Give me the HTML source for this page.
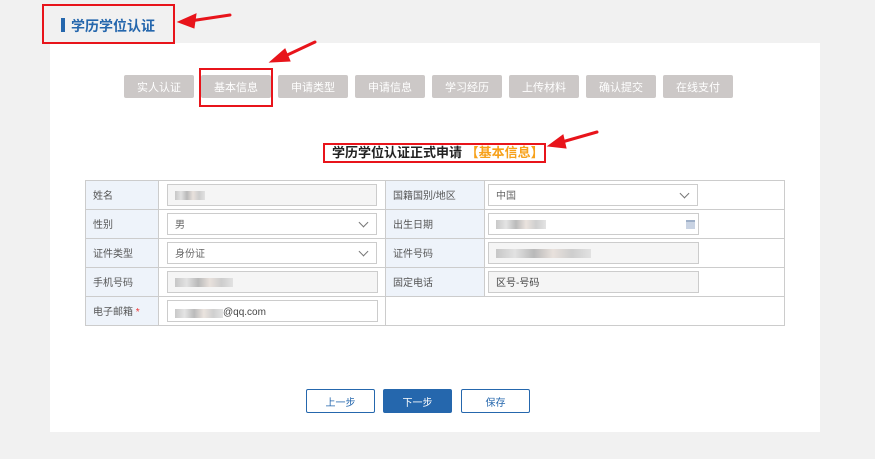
<!DOCTYPE html>
<html><head><meta charset="utf-8"><style>
*{margin:0;padding:0;box-sizing:border-box}
body{width:875px;height:459px;background:#f1f1f1;position:relative;overflow:hidden;font-family:"Liberation Sans","Noto Sans CJK SC",sans-serif;}
.a{position:absolute}
.panel{left:50px;top:43px;width:770px;height:389px;background:#fff}
.tab{top:75px;width:70px;height:23px;background:#ccc8c7;color:#fff;font-size:11px;display:flex;align-items:center;justify-content:center;border-radius:2px;padding-top:1px}
.rb{border:2px solid #e8141b}
table{position:absolute;left:85px;top:180px;width:700px;border-collapse:collapse;font-size:10px;color:#555;line-height:1}
td{border:1px solid #ccc;height:29px;padding:0;vertical-align:middle}
td.l{background:#eef3fa;padding-left:7px;padding-top:4px}
.inp{height:22px;border:1px solid #ccc;background:#f5f5f5;margin-left:8px;font-size:10px;color:#666;display:flex;align-items:center;padding-left:7px;padding-top:4px;position:relative}
.sel{background:#fff}
.sel:after{content:"";position:absolute;right:9px;top:5px;width:6px;height:6px;border-right:1.5px solid #777;border-bottom:1.5px solid #777;transform:rotate(45deg)}
.cal{position:absolute;right:3px;top:6px;width:9px;height:9px;background:#c9d3e3;border-top:2px solid #9fb0c8}
.blur{display:inline-block;height:9px;margin-top:-4px;background:linear-gradient(90deg,#bbb,#ddd,#aaa,#e5dcd6,#c3c3c3,#ddd);opacity:.8}
.btn{top:389px;width:69px;height:24px;border:1px solid #2567ad;font-size:10px;color:#2567ad;display:flex;align-items:center;justify-content:center;border-radius:2px;background:#fff;padding-top:1px}
</style></head><body>
<div class="a panel"></div>
<div class="a" style="left:61px;top:18px;width:4px;height:14px;background:#2567ad"></div>
<div class="a" style="left:71px;top:16px;font-size:14px;font-weight:bold;color:#2567ad">学历学位认证</div>
<div class="a rb" style="left:42px;top:4px;width:133px;height:40px"></div>
<svg class="a" style="left:0;top:0" width="875" height="459">
<g fill="#e8141b" stroke="#e8141b" stroke-linecap="round">
<line x1="230" y1="15" x2="190" y2="21" stroke-width="3"/><polygon points="178,22 196,14 194,28"/>
<line x1="315" y1="42" x2="283" y2="57" stroke-width="3"/><polygon points="270,62 285,49 290,61"/>
<line x1="597" y1="132" x2="562" y2="142" stroke-width="3"/><polygon points="548,146 563,135 566,148"/>
</g></svg>
<div class="a tab" style="left:124px">实人认证</div>
<div class="a tab" style="left:201px">基本信息</div>
<div class="a tab" style="left:278px">申请类型</div>
<div class="a tab" style="left:355px">申请信息</div>
<div class="a tab" style="left:432px">学习经历</div>
<div class="a tab" style="left:509px">上传材料</div>
<div class="a tab" style="left:586px">确认提交</div>
<div class="a tab" style="left:663px">在线支付</div>
<div class="a rb" style="left:199px;top:68px;width:74px;height:39px"></div>
<div class="a" style="left:332px;top:146px;font-size:13px;font-weight:bold;color:#222;white-space:nowrap;line-height:1">学历学位认证正式申请 <span style="color:#f7a11a">【基本信息】</span></div>
<div class="a rb" style="left:323px;top:143px;width:223px;height:20px"></div>
<table>
<tr><td class="l" style="width:73px">姓名</td><td style="width:227px"><div class="inp" style="width:210px"><span class="blur" style="width:30px"></span></div></td><td class="l" style="width:99px">国籍国别/地区</td><td><div class="inp sel" style="width:210px;margin-left:3px">中国</div></td></tr>
<tr><td class="l">性别</td><td><div class="inp sel" style="width:210px">男</div></td><td class="l">出生日期</td><td><div class="inp" style="width:211px;margin-left:3px;background:#fff"><span class="blur" style="width:50px"></span><span class="cal"></span></div></td></tr>
<tr><td class="l">证件类型</td><td><div class="inp sel" style="width:210px">身份证</div></td><td class="l">证件号码</td><td><div class="inp" style="width:211px;margin-left:3px"><span class="blur" style="width:95px"></span></div></td></tr>
<tr><td class="l">手机号码</td><td><div class="inp" style="width:211px"><span class="blur" style="width:58px"></span></div></td><td class="l">固定电话</td><td><div class="inp" style="width:211px;margin-left:3px;color:#444">区号-号码</div></td></tr>
<tr><td class="l">电子邮箱 <span style="color:#e33">*</span></td><td><div class="inp" style="width:211px;background:#fff;color:#444"><span class="blur" style="width:48px;margin-top:0"></span>@qq.com</div></td><td colspan="2" style="border-left:none"></td></tr>
</table>
<div class="a btn" style="left:306px">上一步</div>
<div class="a btn" style="left:383px;background:#2567ad;color:#fff">下一步</div>
<div class="a btn" style="left:461px">保存</div>
</body></html>
